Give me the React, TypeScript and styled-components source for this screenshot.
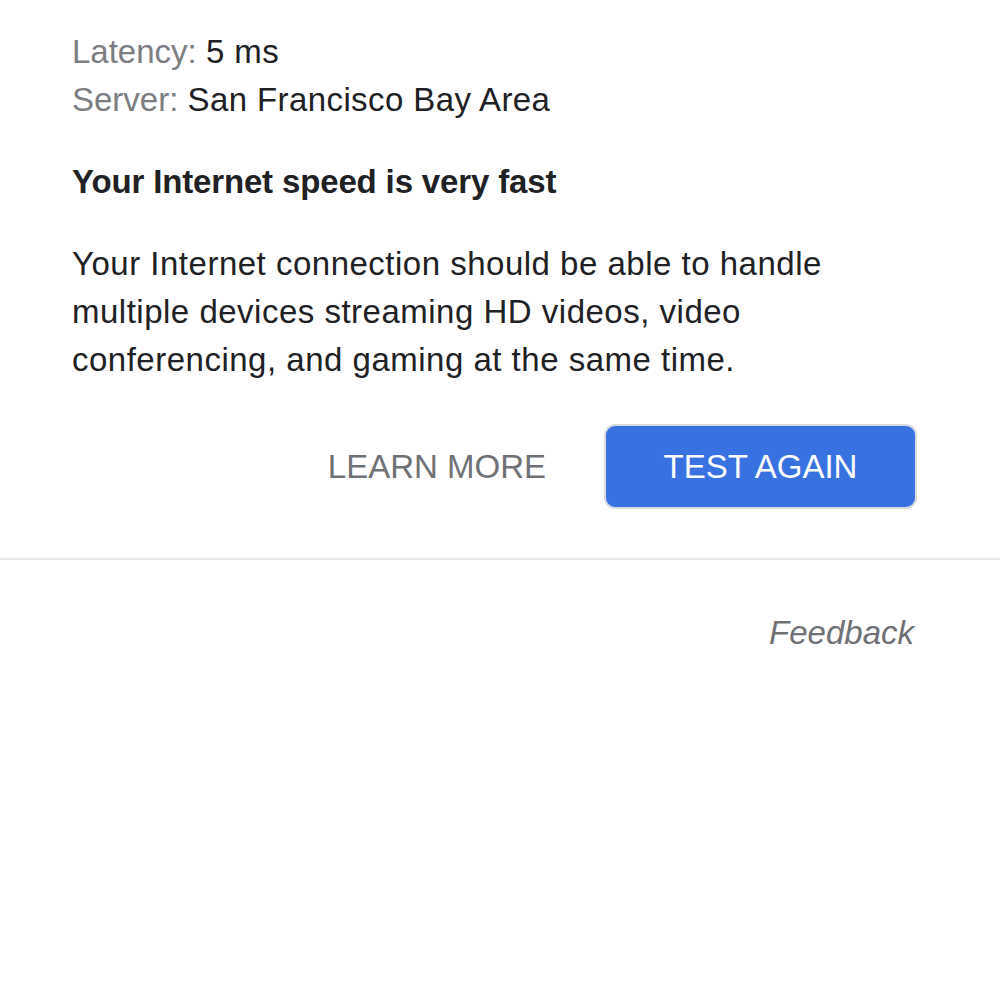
import React from "react";
import styled, { createGlobalStyle } from "styled-components";

const Global = createGlobalStyle`
  html, body { margin: 0; padding: 0; background: #ffffff; }
  body { font-family: "Liberation Sans", Arial, sans-serif; }
`;

const Page = styled.div`
  width: 1000px;
  display: flex;
  flex-direction: column;
`;

const Card = styled.section`
  padding: 28px 83px 49px 72px;
  display: flex;
  flex-direction: column;
`;

const Stats = styled.div`
  display: flex;
  flex-direction: column;
`;

const StatLine = styled.div`
  font-size: 33px;
  line-height: 48px;
  color: #202124;
`;

const StatValue = styled.span`
  letter-spacing: 0.4px;
`;

const StatLabel = styled.span`
  color: #7c7e82;
`;

const Heading = styled.h2`
  margin: 34px 0 0;
  font-size: 33px;
  line-height: 48px;
  font-weight: 700;
  letter-spacing: -0.15px;
  color: #202124;
`;

const Body = styled.p`
  margin: 34px 0 0;
  font-size: 33px;
  line-height: 48px;
  letter-spacing: 0.5px;
  color: #202124;
`;

const Actions = styled.div`
  margin-top: 40px;
  display: flex;
  justify-content: flex-end;
  align-items: center;
  gap: 58px;
`;

const TextButton = styled.button`
  border: none;
  background: none;
  padding: 0;
  font-family: "Liberation Sans", Arial, sans-serif;
  font-size: 33px;
  color: #6f7175;
  text-transform: uppercase;
`;

const PrimaryButton = styled.button`
  width: 313px;
  height: 85px;
  border-radius: 11px;
  border: 2px solid #d9dbe0;
  background: #3872e0;
  color: #ffffff;
  font-family: "Liberation Sans", Arial, sans-serif;
  font-size: 33px;
  text-transform: uppercase;
`;

const Divider = styled.hr`
  margin: 0;
  border: none;
  border-top: 2px solid #e8e8e9;
`;

const Footer = styled.footer`
  display: flex;
  justify-content: flex-end;
  padding: 54px 86px 0 0;
`;

const FeedbackLink = styled.a`
  font-size: 33px;
  font-style: italic;
  color: #6f7175;
  text-decoration: none;
`;

export default function App() {
  return (
    <Page>
      <Global />
      <Card>
        <Stats>
          <StatLine>
            <StatLabel>Latency:</StatLabel> <StatValue>5 ms</StatValue>
          </StatLine>
          <StatLine>
            <StatLabel>Server:</StatLabel>{" "}
            <StatValue>San Francisco Bay Area</StatValue>
          </StatLine>
        </Stats>
        <Heading>Your Internet speed is very fast</Heading>
        <Body>
          Your Internet connection should be able to handle multiple devices
          streaming HD videos, video conferencing, and gaming at the same time.
        </Body>
        <Actions>
          <TextButton>Learn more</TextButton>
          <PrimaryButton>Test again</PrimaryButton>
        </Actions>
      </Card>
      <Divider />
      <Footer>
        <FeedbackLink href="#">Feedback</FeedbackLink>
      </Footer>
    </Page>
  );
}
